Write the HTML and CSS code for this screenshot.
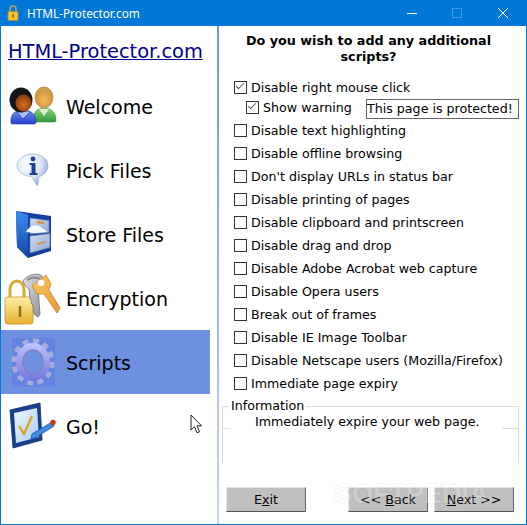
FILE: index.html
```html
<!DOCTYPE html>
<html lang="en">
<head>
<meta charset="UTF-8">
<title>HTML-Protector.com</title>
<link rel="stylesheet" href="styles.css">
</head>
<body>
<div class="window">
  <div class="titlebar">
    <svg class="app-icon" width="12" height="16" viewBox="0 0 12 16">
      <path d="M3 7V4a3 3 0 0 1 6 0v3" fill="none" stroke="#b9a468" stroke-width="1.500"/>
      <rect x="1" y="6.500" width="10" height="9" rx="1" fill="#f2c338" stroke="#b58a20" stroke-width=".8"/>
      <rect x="5.300" y="9" width="1.400" height="4" fill="#8a6a10"/>
    </svg>
    <span class="title">HTML-Protector.com</span>
    <div class="controls">
      <svg width="46" height="26" viewBox="0 0 46 26"><path d="M19 13.500h10" stroke="#fff"/></svg>
      <svg width="46" height="26" viewBox="0 0 46 26"><rect x="18.500" y="8.500" width="9" height="9" fill="none" stroke="#3b97e3"/></svg>
      <svg width="46" height="26" viewBox="0 0 46 26"><path d="M18 8l10 10M28 8L18 18" stroke="#fff" fill="none"/></svg>
    </div>
  </div>
  <div class="body">
    <div class="sidebar">
      <a class="brand">HTML-Protector.com</a>
      <div class="nav-item">
        <span class="nav-icon">
          <svg width="60" height="60" viewBox="0 0 60 60">
            <defs>
              <linearGradient id="green" x1="0" y1="0" x2="0" y2="1"><stop offset="0" stop-color="#8fd67a"/><stop offset="1" stop-color="#2f9a3c"/></linearGradient>
              <linearGradient id="blue" x1="0" y1="0" x2="0" y2="1"><stop offset="0" stop-color="#6f8ff0"/><stop offset="1" stop-color="#2440d0"/></linearGradient>
              <radialGradient id="skin1" cx="50%" cy="60%" r="60%"><stop offset="0" stop-color="#f9b75a"/><stop offset="1" stop-color="#c98a30"/></radialGradient>
              <radialGradient id="skin2" cx="50%" cy="60%" r="60%"><stop offset="0" stop-color="#d96a1c"/><stop offset="1" stop-color="#8a3c10"/></radialGradient>
            </defs>
            <path d="M32 46c0-9 3-14 11-14s12 5 12 12c0 2-1 2-3 2z" fill="url(#green)" stroke="#3f8f4a" stroke-width=".6"/>
            <path d="M38 33l5 7 5-7z" fill="#d8f0d0"/>
            <ellipse cx="43" cy="21.500" rx="9" ry="10.500" fill="url(#skin1)" stroke="#b9924a" stroke-width=".8"/>
            <path d="M34 20c0-11 18-11 18 0-5-4-13-4-18 0z" fill="#c8a04c"/>
            <path d="M10 47c-1-9 4-13 12-13s13 4 13 12c0 2-1 2-3 2H13c-2 0-3 0-3-1z" fill="url(#blue)" stroke="#2a3f9c" stroke-width=".6"/>
            <path d="M16 36l6 7 7-7" fill="#a9bdf4" stroke="#2a3f9c" stroke-width=".8"/>
            <ellipse cx="20" cy="24" rx="11.500" ry="12.500" fill="#161616"/>
            <ellipse cx="22.500" cy="27" rx="8" ry="8.500" fill="url(#skin2)"/>
          </svg>
        </span>
        <span class="nav-label">Welcome</span>
      </div>
      <div class="nav-item">
        <span class="nav-icon">
          <svg width="60" height="60" viewBox="0 0 60 60">
            <defs><radialGradient id="bub" cx="35%" cy="30%" r="75%"><stop offset="0" stop-color="#fff"/><stop offset=".6" stop-color="#d9e5f5"/><stop offset="1" stop-color="#7f9bd0"/></radialGradient></defs>
            <path d="M31.500 14c9 0 15.500 5 15.500 11.500S41.500 36 38 36.500L36.500 46l-6-9.500C22 36 16 31.500 16 25.500S22.500 14 31.500 14z" fill="url(#bub)" stroke="#9db0d0" stroke-width=".7"/>
            <circle cx="32" cy="19" r="2.400" fill="#1d3f9a"/>
            <path d="M28.500 23h6v10h2v2h-8v-2h2v-8h-2z" fill="#1d3f9a"/>
          </svg>
        </span>
        <span class="nav-label">Pick Files</span>
      </div>
      <div class="nav-item">
        <span class="nav-icon">
          <svg width="60" height="60" viewBox="0 0 60 60">
            <defs>
              <linearGradient id="drawer" x1="0" y1="0" x2="1" y2="1"><stop offset="0" stop-color="#d3dff2"/><stop offset="1" stop-color="#8fa5d0"/></linearGradient>
              <linearGradient id="side" x1="0" y1="0" x2="0" y2="1"><stop offset="0" stop-color="#3a8cf0"/><stop offset="1" stop-color="#1546a8"/></linearGradient>
            </defs>
            <path d="M15 7l35 5v35l-23 7-11-11z" fill="#153f9e"/>
            <path d="M15 7l12 4v43L16 43z" fill="url(#side)"/>
            <path d="M29 14l19 2.500v12L29 30z" fill="url(#drawer)" stroke="#5a78b0" stroke-width=".6"/>
            <path d="M29 32l20-2.500v14L29 49z" fill="url(#drawer)" stroke="#5a78b0" stroke-width=".6"/>
            <path d="M25 28c3-6 9-8 13-6 2 2 6 3 8 6l-12 1z" fill="#f5f8fd"/>
            <path d="M36 18l7 1M36 40l8-2" stroke="#d98a2b" stroke-width="1.800"/>
          </svg>
        </span>
        <span class="nav-label">Store Files</span>
      </div>
      <div class="nav-item">
        <span class="nav-icon">
          <svg width="60" height="60" viewBox="0 0 60 60">
            <defs>
              <linearGradient id="gold" x1="0" y1="0" x2="0" y2="1"><stop offset="0" stop-color="#fff0a8"/><stop offset="1" stop-color="#e8b030"/></linearGradient>
              <linearGradient id="steel" x1="0" y1="0" x2="1" y2="1"><stop offset="0" stop-color="#e4e5e8"/><stop offset="1" stop-color="#8e9095"/></linearGradient>
              <linearGradient id="goldkey" x1="0" y1="0" x2="1" y2="1"><stop offset="0" stop-color="#fbc860"/><stop offset="1" stop-color="#e89a30"/></linearGradient>
            </defs>
            <path d="M9 30v-8c0-12 14-12 14 0v8" fill="none" stroke="#d9ab36" stroke-width="3"/>
            <rect x="4" y="29" width="28" height="27" rx="2.500" fill="url(#gold)" stroke="#c7962c" stroke-width=".8"/>
            <path d="M19 38v11" stroke="#8f7420" stroke-width="2.500"/>
            <path d="M22 13c3-6 15-9 19-5l-1 9-3 3 2 26-2 3-4-3-1-9-2-2 1-2-2-2-1-10c-3-2-5-5-6-8z" fill="url(#steel)" stroke="#6d6f74" stroke-width=".8"/>
            <path d="M26 12c4-3 9-3 13-1" fill="none" stroke="#8e9095" stroke-width="2.500"/>
            <path d="M31 18l14-11 5 9-2 6 11 18-3 5-13-19-7 0z" fill="url(#goldkey)" stroke="#c9822b" stroke-width=".8"/>
            <circle cx="40" cy="15" r="3.200" fill="#fff"/>
          </svg>
        </span>
        <span class="nav-label">Encryption</span>
      </div>
      <div class="nav-item active">
        <span class="nav-icon">
          <svg width="60" height="60" viewBox="0 0 60 60">
            <defs><linearGradient id="cog" x1="0" y1="0" x2="0" y2="1"><stop offset="0" stop-color="#c0c4f8"/><stop offset="1" stop-color="#6f74dc"/></linearGradient></defs>
            <rect x="11" y="6" width="43" height="49" fill="#6583e4"/>
            <ellipse cx="32" cy="30" rx="18.500" ry="20.500" fill="none" stroke="#aeb2bc" stroke-width="6" pathLength="120" stroke-dasharray="5.500 4.500"/>
            <ellipse cx="32" cy="30" rx="18" ry="20" fill="none" stroke="#a4a9f0" stroke-width="4.500" pathLength="120" stroke-dasharray="4.500 5.500" stroke-dashoffset="-.5"/>
            <ellipse cx="32" cy="30" rx="17" ry="19" fill="url(#cog)"/>
            <ellipse cx="32" cy="30" rx="10" ry="12" fill="#6d90e0" stroke="#7c80c4" stroke-width="1.500"/>
          </svg>
        </span>
        <span class="nav-label">Scripts</span>
      </div>
      <div class="nav-item">
        <span class="nav-icon">
          <svg width="60" height="60" viewBox="0 0 60 60">
            <defs><linearGradient id="sheet" x1="0" y1="0" x2="1" y2="1"><stop offset="0" stop-color="#eef6ff"/><stop offset="1" stop-color="#a9cdf4"/></linearGradient></defs>
            <path d="M9 14L39 7l2 37-29 8z" fill="#16408f" stroke="#0f2c6e" stroke-width=".8"/>
            <path d="M13 17l23-5 2 29-23 6z" fill="url(#sheet)"/>
            <path d="M18 30l5 8 8-18" fill="none" stroke="#dba118" stroke-width="2.200"/>
            <path d="M31 38l20-12 2 4-19 12-4 1z" fill="#3f8be0" stroke="#1b4fa8" stroke-width=".8"/>
            <circle cx="52" cy="26.500" r="2.700" fill="#c53a20"/>
          </svg>
        </span>
        <span class="nav-label">Go!</span>
      </div>
    </div>
    <div class="main">
      <h1 class="heading">Do you wish to add any additional scripts?</h1>
      <div class="options">
        <div class="option"><span class="box checked"></span>Disable right mouse click</div>
        <div class="option sub">
          <span class="box checked"></span>Show warning
          <span class="warn-input">This page is protected!</span>
        </div>
        <div class="option"><span class="box"></span>Disable text highlighting</div>
        <div class="option"><span class="box"></span>Disable offline browsing</div>
        <div class="option"><span class="box"></span>Don't display URLs in status bar</div>
        <div class="option"><span class="box"></span>Disable printing of pages</div>
        <div class="option"><span class="box"></span>Disable clipboard and printscreen</div>
        <div class="option"><span class="box"></span>Disable drag and drop</div>
        <div class="option"><span class="box"></span>Disable Adobe Acrobat web capture</div>
        <div class="option"><span class="box"></span>Disable Opera users</div>
        <div class="option"><span class="box"></span>Break out of frames</div>
        <div class="option"><span class="box"></span>Disable IE Image Toolbar</div>
        <div class="option"><span class="box"></span>Disable Netscape users (Mozilla/Firefox)</div>
        <div class="option"><span class="box"></span>Immediate page expiry</div>
      </div>
      <fieldset class="info">
        <legend>Information</legend>
        <p>Immediately expire your web page.</p>
      </fieldset>
      <div class="buttons">
        <button class="btn">E<u>x</u>it</button>
        <div class="nav-buttons">
          <button class="btn">&lt;&lt; <u>B</u>ack</button>
          <button class="btn"><u>N</u>ext &gt;&gt;</button>
        </div>
      </div>
    </div>
  </div>
  <span class="watermark">SOFTPEDIA</span>
  <svg class="cursor" width="14" height="20" viewBox="0 0 14 20"><path d="M1 1v15l3.500-3.200 2.500 6 2.500-1-2.500-6h4.500z" fill="#fff" stroke="#222"/></svg>
</div>
</body>
</html>
```

FILE: styles.css
```css
html, body { margin: 0; padding: 0; }
body { font-family: "DejaVu Sans", Verdana, sans-serif; font-size: 12.65px; color: #000; background: #fff; }
.window { position: relative; width: 527px; height: 525px; box-sizing: border-box; border: 1px solid #0078d7; border-top: 0; display: flex; flex-direction: column; overflow: hidden; }
.titlebar { height: 26px; background: #0078d7; color: #fff; display: flex; align-items: center; padding-left: 6px; flex: none; }
.app-icon { margin-right: 8px; }
.title { font-family: "Noto Sans", "DejaVu Sans", sans-serif; font-size: 11.8px; }
.controls { margin-left: auto; display: flex; }
.controls svg { display: block; }
.body { flex: 1; display: flex; min-height: 0; }
.sidebar { width: 216px; flex: none; border-right: 2px solid #a8bff0; border-image: linear-gradient(#6f93e6, #c2d3f6) 1; background: #fff; padding-top: 14px; box-sizing: content-box; }
.brand { display: block; font-size: 19.4px; color: #00008b; text-decoration: underline; margin: 0 0 0 7px; height: 34px; line-height: 24px; }
.nav-item { height: 64px; width: 209px; display: flex; align-items: center; font-size: 19px; }
.nav-item.active { background: #6d90e0; }
.nav-icon { width: 65px; height: 60px; flex: none; }
.nav-icon svg { display: block; }
.nav-label { margin-top: 2px; }
.main { flex: 1; padding: 0 7px 0 3px; min-width: 0; display: flex; flex-direction: column; }
.heading { font-size: 12.75px; font-weight: bold; text-align: center; margin: 7px 0 0; line-height: 16px; padding: 0 15px 0 11px; }
.options { margin-top: 11px; }
.option { height: 23px; display: flex; align-items: center; padding-left: 12px; white-space: nowrap; }
.option.sub { padding-left: 24px; margin-top: -3px; }
.box { width: 11px; height: 11px; border: 1px solid #333; margin-right: 4px; flex: none; position: relative; background: #fff; }
.box.checked::after { content: ""; position: absolute; left: 1px; top: 1px; width: 7px; height: 3px; border-left: 1.500px solid #555; border-bottom: 1.500px solid #555; transform: rotate(-45deg); }
.warn-input { box-sizing: border-box; width: 153px; height: 20px; line-height: 18px; border: 1px solid #666; padding-left: 0; margin-left: auto; position: relative; top: 1px; }
.info { position: relative; border: 1px solid #ddd; border-bottom: 0; margin: 4px 0 0; padding: 0; height: 63px; box-sizing: border-box; }
.info::before, .info::after { content: ""; position: absolute; bottom: 0; height: 1px; background: #ddd; }
.info::before { left: 0; width: 8px; }
.info::after { right: 0; width: 16px; }
.info legend { padding: 0 2px; margin-left: 6px; line-height: 14px; }
.info p { margin: 1px 0 0 32px; }
.buttons { display: flex; justify-content: space-between; margin: 25px 5px 0 4px; }
.nav-buttons { display: flex; gap: 6px; }
.btn { width: 80px; height: 25px; background: #c0c0c0; border: 1px solid; border-color: #e4e4e4 #666 #555 #e4e4e4; font: inherit; padding: 0; color: #000; }
.watermark { position: absolute; left: 333px; top: 479px; font: bold 27px "Liberation Sans", sans-serif; color: #fff; opacity: .22; text-shadow: 0 0 2px #888; pointer-events: none; }
.cursor { position: absolute; left: 189px; top: 414px; }
```
